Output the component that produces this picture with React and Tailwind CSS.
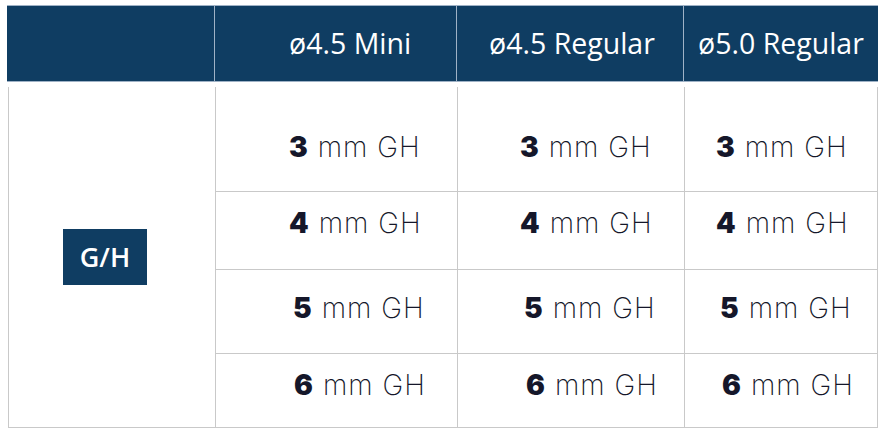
import React from "react";

const navy = "bg-[#0f3d62]";
const line = "border-[#c9c9c9]";

// per row: height, top padding for the text, left offsets in each of the three size columns
const rows = [
  { n: 3, h: "h-[105px]", pt: "pt-[46px]", pad: ["pl-[73px]", "pl-[62px]", "pl-[31px]"] },
  { n: 4, h: "h-[78px]", pt: "pt-[17px]", pad: ["pl-[73px]", "pl-[62px]", "pl-[31px]"] },
  { n: 5, h: "h-[84px]", pt: "pt-[24px]", pad: ["pl-[77px]", "pl-[66px]", "pl-[35px]"] },
  { n: 6, h: "h-[73px]", pt: "pt-[17px]", pad: ["pl-[78px]", "pl-[68px]", "pl-[37px]"] },
];

const colW = ["w-[242px]", "w-[227px]", "flex-1"];

function Cell({ n, pad, pt, w, last }) {
  return (
    <div className={`${w} h-full ${pad} ${pt} ${last ? "" : `border-r ${line}`}`}>
      <div
        className="text-[28px] leading-none text-[#15172a] whitespace-nowrap"
        style={{ fontFamily: "Inter, sans-serif" }}
      >
        <span className="font-black">{n}</span>
        <span className="font-extralight tracking-[1px] ml-[10px]">mm GH</span>
      </div>
    </div>
  );
}

export default function App() {
  return (
    <div
      className="w-[884px] h-[436px] bg-white overflow-hidden"
      style={{ fontFamily: '"Open Sans", sans-serif' }}
    >
      {/* header */}
      <div
        className={`ml-[7px] mt-[5px] w-[871px] h-[77px] flex ${navy} border-t border-b border-[#9fb2c6] text-white text-[28.5px]`}
      >
        <div className="w-[208px] border-r border-[#9fb2c6]" />
        <div className="w-[242px] border-r border-[#9fb2c6] flex items-center pl-[74px]">ø4.5 Mini</div>
        <div className="w-[227px] border-r border-[#9fb2c6] flex items-center pl-[32px]">ø4.5 Regular</div>
        <div className="flex-1 flex items-center pl-[14px]">ø5.0 Regular</div>
      </div>

      {/* body */}
      <div className={`ml-[8px] mt-[5px] w-[870px] h-[341px] flex border-l border-r border-b ${line}`}>
        <div className={`w-[207px] border-r ${line} flex items-center justify-center pr-[14px]`}>
          <div
            className={`w-[84px] h-[56px] ${navy} flex items-center justify-center text-white text-[27px] font-semibold`}
          >
            G/H
          </div>
        </div>
        <div className="flex-1 flex flex-col">
          {rows.map((r, i) => (
            <div
              key={r.n}
              className={`${r.h} flex ${i < rows.length - 1 ? `border-b ${line}` : ""}`}
            >
              {colW.map((w, j) => (
                <Cell key={j} n={r.n} pad={r.pad[j]} pt={r.pt} w={w} last={j === 2} />
              ))}
            </div>
          ))}
        </div>
      </div>
    </div>
  );
}
